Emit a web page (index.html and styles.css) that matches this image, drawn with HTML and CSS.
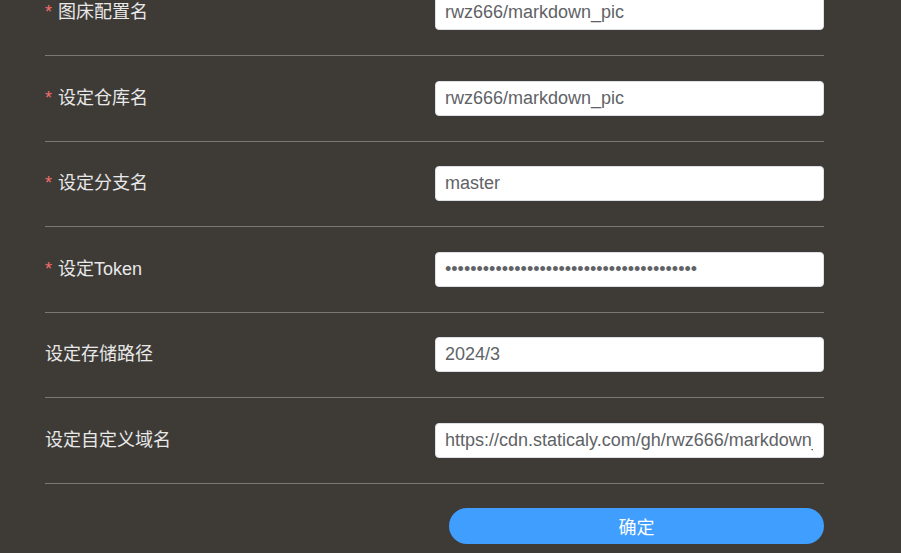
FILE: index.html
```
<!DOCTYPE html>
<html lang="zh-CN">
<head>
<meta charset="utf-8">
<title>图床配置</title>
<link rel="stylesheet" href="styles.css">
</head>
<body>
<div class="form">
  <div class="row">
    <label class="label required">图床配置名</label>
    <input class="input" type="text" value="rwz666/markdown_pic">
  </div>
  <div class="row">
    <label class="label required">设定仓库名</label>
    <input class="input" type="text" value="rwz666/markdown_pic">
  </div>
  <div class="row">
    <label class="label required">设定分支名</label>
    <input class="input" type="text" value="master">
  </div>
  <div class="row">
    <label class="label required">设定Token</label>
    <input class="input" type="password" value="abcdefghijabcdefghijabcdefghijabcdefghij">
  </div>
  <div class="row">
    <label class="label">设定存储路径</label>
    <input class="input" type="text" value="2024/3">
  </div>
  <div class="row">
    <label class="label">设定自定义域名</label>
    <input class="input" type="text" value="https://cdn.staticaly.com/gh/rwz666/markdown_pic@master/">
  </div>
  <div class="actions">
    <button class="btn" type="button">确定</button>
  </div>
</div>
</body>
</html>
```
FILE: styles.css
```
html, body {
  margin: 0;
  padding: 0;
  background: #3e3b37;
  height: 100%;
  overflow: hidden;
}
.form {
  width: 779px;
  margin-left: 45px;
  margin-top: -29.5px;
}
.row {
  display: flex;
  align-items: center;
  padding: 24.75px 0;
  border-bottom: 1px solid #7a7774;
}
.label {
  flex: 0 0 390px;
  font-family: "Liberation Sans", "Noto Sans CJK SC", sans-serif;
  font-size: 18px;
  color: #e8e8e8;
  padding-bottom: 5px;
  box-sizing: border-box;
}
.required::before {
  content: "*";
  color: #f56c6c;
  margin-right: 6px;
}
.input {
  flex: 1;
  min-width: 0;
  height: 35px;
  box-sizing: border-box;
  border: 1px solid #dcdfe6;
  border-radius: 4px;
  background: #fff;
  padding: 0 10px 0 9px;
  font-family: "Liberation Sans", Arial, sans-serif;
  font-size: 18px;
  color: #606266;
  outline: none;
  margin: 0;
}
.actions {
  padding-top: 24px;
  padding-left: 404px;
}
.btn {
  display: block;
  width: 375px;
  height: 36px;
  border: none;
  border-radius: 18px;
  background: #409eff;
  color: #fff;
  font-family: "Noto Sans CJK SC", sans-serif;
  font-size: 18px;
  padding: 0;
  margin: 0;
}
```
